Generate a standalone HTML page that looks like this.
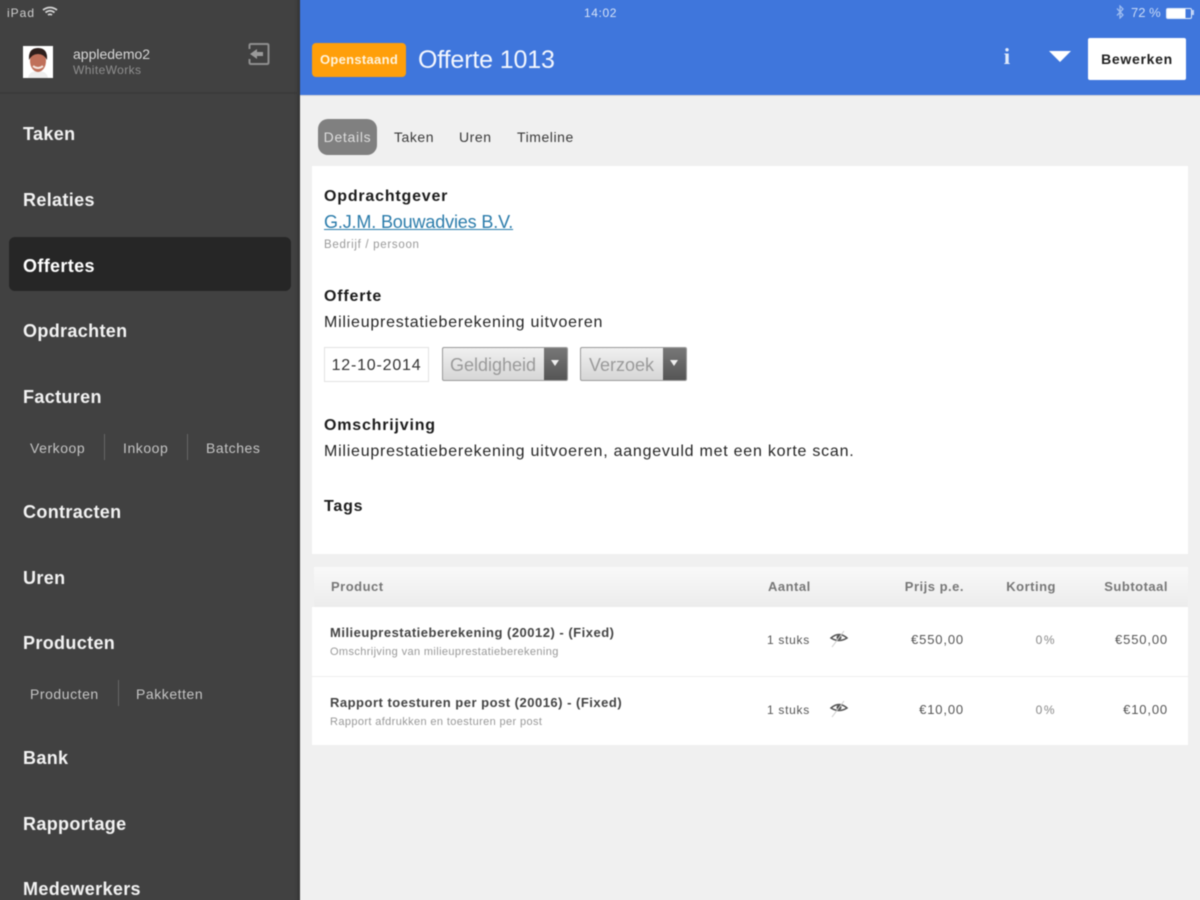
<!DOCTYPE html>
<html lang="nl"><head><meta charset="utf-8"><title>Offerte 1013</title>
<style>
html,body{margin:0;padding:0;width:1200px;height:900px;overflow:hidden;background:#f0f0f0;font-family:"Liberation Sans",sans-serif}
#clip{position:absolute;left:0;top:0;width:1200px;height:900px;overflow:hidden}
#w{position:absolute;left:0;top:0;width:1200px;height:900px;filter:blur(.45px)}
#side{position:absolute;left:-6px;top:-6px;width:306px;height:912px;background:#414141;box-shadow:inset -3px 0 3px -1px #333}
#top{position:absolute;left:300px;top:-6px;width:906px;height:101px;background:#3f76dc;border-bottom:1px solid #d8d8d8}
.t{position:absolute;white-space:nowrap;line-height:20px;height:20px}
.n{font-size:18px;font-weight:bold;color:#f2f2f2;left:23px;letter-spacing:.35px;margin-top:.5px}
.s{font-size:14px;color:#c4c4c4;letter-spacing:.55px;margin-top:-.5px}
.tab{font-size:14px;color:#3a3a3a;letter-spacing:.55px}
.sep{position:absolute;width:1px;height:26px;background:#666}
.h{font-size:16px;font-weight:bold;color:#1c1c1c;left:324px;letter-spacing:.8px;margin-top:1px}
.b{font-size:16px;color:#262626;left:324px;letter-spacing:.76px}
.th{font-size:13px;font-weight:bold;color:#777;letter-spacing:.5px;margin-top:.5px}
.r{text-align:right}
.c{font-size:12px;color:#555;letter-spacing:.7px}
.p{font-size:13px;color:#555;letter-spacing:.85px}
.pt{font-size:13px;font-weight:bold;color:#444;letter-spacing:.5px;left:330px;margin-top:.5px}
.ps{font-size:11px;color:#999;letter-spacing:.38px;left:330px}
.sel{position:absolute;top:347px;height:34px;border:1px solid #999;border-radius:2px;box-sizing:border-box;background:linear-gradient(#f0f0f0,#d6d6d6);color:#9a9a9a;font-size:18px;line-height:34px;overflow:hidden}
.sel i{position:absolute;right:0;top:0;width:23px;height:100%;background:linear-gradient(#777,#555)}
.sel i:after{content:"";position:absolute;left:7px;top:12px;border:4px solid transparent;border-top:6px solid #eee;border-bottom:0}
</style></head><body><div id="clip"><div id="w">
<div id="side"></div>
<div id="top"></div>

<div class="t" style="left:7px;top:3px;font-size:12px;color:#cfcfcf;letter-spacing:1px">iPad</div>
<svg style="position:absolute;left:42px;top:6px" width="16" height="12" viewBox="0 0 16 12"><path d="M1 4Q8-1 15 4M3.500 6.500Q8 3 12.500 6.500M6 9Q8 7.500 10 9" fill="none" stroke="#d5d5d5" stroke-width="1.800"/></svg>

<svg style="position:absolute;left:23px;top:46px" width="30" height="32" viewBox="0 0 30 32">
<rect width="30" height="32" fill="#fff"/><path d="M5 32Q6 25 15 25Q24 25 25 32Z" fill="#eee"/><ellipse cx="15" cy="15" rx="8" ry="11" fill="#c0705a"/><path d="M6 14Q5 2 15 2Q25 2 24 14Q21 8 15 8Q9 8 6 14Z" fill="#2e1f1c"/><path d="M10 20Q15 24 20 20" stroke="#f4e6df" stroke-width="2" fill="none"/>
</svg>
<div class="t" style="left:73px;top:44px;font-size:14px;color:#d6d6d6">appledemo2</div>
<div class="t" style="left:73px;top:60px;font-size:12px;color:#8f8f8f;letter-spacing:.4px">WhiteWorks</div>
<svg style="position:absolute;left:247px;top:42px" width="24" height="24" viewBox="0 0 24 24"><path d="M2.500 7V3.500Q2.500 2 4 2H20Q21.500 2 21.500 3.500V20.500Q21.500 22 20 22H4Q2.500 22 2.500 20.500V17" fill="none" stroke="#8f8f8f" stroke-width="2"/><path d="M3 12L10 7V10H16V14H10V17Z" fill="#9a9a9a"/></svg>
<div style="position:absolute;left:0;top:92px;width:297px;height:2px;background:#3a3a3a"></div>

<div style="position:absolute;left:9px;top:237px;width:282px;height:54px;background:#262626;border-radius:6px"></div>
<div class="t n" style="top:123px">Taken</div>
<div class="t n" style="top:189px">Relaties</div>
<div class="t n" style="top:255px;color:#fff">Offertes</div>
<div class="t n" style="top:320px">Opdrachten</div>
<div class="t n" style="top:386px">Facturen</div>
<div class="t s" style="left:30px;top:438px">Verkoop</div><div class="sep" style="left:104px;top:434px"></div>
<div class="t s" style="left:123px;top:438px">Inkoop</div><div class="sep" style="left:187px;top:434px"></div>
<div class="t s" style="left:206px;top:438px">Batches</div>
<div class="t n" style="top:501px">Contracten</div>
<div class="t n" style="top:567px">Uren</div>
<div class="t n" style="top:632px">Producten</div>
<div class="t s" style="left:30px;top:684px">Producten</div><div class="sep" style="left:118px;top:680px"></div>
<div class="t s" style="left:136px;top:684px">Pakketten</div>
<div class="t n" style="top:747px">Bank</div>
<div class="t n" style="top:813px">Rapportage</div>
<div class="t n" style="top:878px">Medewerkers</div>

<div class="t" style="left:584px;top:3px;font-size:12px;color:#d5e2f8;letter-spacing:.6px">14:02</div>
<svg style="position:absolute;left:1115px;top:5px" width="10" height="14" viewBox="0 0 10 14"><path d="M2 3.500L8 10L5 13V1L8 4L2 10.500" fill="none" stroke="#9dbcf0" stroke-width="1.300"/></svg>
<div class="t" style="left:1131px;top:3px;font-size:13px;color:#c9daf7">72 %</div>
<div style="position:absolute;left:1166px;top:8px;width:24px;height:9px;border:1px solid #dfe9fa;border-radius:2px;background:linear-gradient(90deg,#fff 78%,transparent 78%)"></div>
<div style="position:absolute;left:1192px;top:10px;width:2px;height:5px;background:#b9cff5"></div>

<div class="t" style="left:312px;top:43px;width:94px;height:34px;line-height:34px;background:#ff9f0a;border-radius:4px;color:#fff4de;font-size:13px;font-weight:bold;text-align:center;letter-spacing:.3px">Openstaand</div>
<div class="t" style="left:418px;top:45px;height:30px;line-height:30px;font-size:25px;color:#f2f6fe;letter-spacing:-.15px">Offerte 1013</div>
<div class="t" style="left:1000px;top:47px;width:14px;text-align:center;font-family:'Liberation Serif',serif;font-weight:bold;font-size:23px;color:#dfe9fb">i</div>
<div style="position:absolute;left:1049px;top:51px;border-left:11px solid transparent;border-right:11px solid transparent;border-top:11px solid #fff"></div>
<div class="t" style="left:1088px;top:38px;width:98px;height:42px;line-height:42px;background:#fff;border-radius:2px;text-align:center;font-size:14px;font-weight:bold;color:#222;letter-spacing:.7px">Bewerken</div>

<div class="t" style="left:318px;top:119px;width:59px;height:36px;line-height:36px;background:#808080;border-radius:10px;text-align:center;font-size:14px;color:#ddd;letter-spacing:.7px">Details</div>
<div class="t tab" style="left:394px;top:127px">Taken</div>
<div class="t tab" style="left:459px;top:127px">Uren</div>
<div class="t tab" style="left:517px;top:127px">Timeline</div>

<div style="position:absolute;left:312px;top:166px;width:876px;height:388px;background:#fff"></div>
<div class="t h" style="top:186px">Opdrachtgever</div>
<div class="t b" style="top:212px;font-size:18px;color:#2b7cab;text-decoration:underline;letter-spacing:-.15px">G.J.M. Bouwadvies B.V.</div>
<div class="t" style="left:324px;top:235px;font-size:11.500px;color:#999;letter-spacing:.7px">Bedrijf / persoon</div>
<div class="t h" style="top:286px">Offerte</div>
<div class="t b" style="top:313px">Milieuprestatieberekening uitvoeren</div>
<div class="t" style="left:324px;top:347px;width:105px;height:35px;line-height:36px;box-sizing:border-box;border:1px solid #e2e2e2;text-align:center;font-size:16px;color:#333;letter-spacing:.8px">12-10-2014</div>
<div class="sel" style="left:442px;width:126px;padding-left:7px">Geldigheid<i></i></div>
<div class="sel" style="left:580px;width:107px;padding-left:8px">Verzoek<i></i></div>
<div class="t h" style="top:415px">Omschrijving</div>
<div class="t b" style="top:442px">Milieuprestatieberekening uitvoeren, aangevuld met een korte scan.</div>
<div class="t h" style="top:496px">Tags</div>

<div style="position:absolute;left:314px;top:567px;width:874px;height:40px;background:linear-gradient(#f9f9f9,#ececec)"></div>
<div class="t th" style="left:331px;top:576px">Product</div>
<div class="t th" style="left:768px;top:576px">Aantal</div>
<div class="t th r" style="left:864px;width:100px;top:576px">Prijs p.e.</div>
<div class="t th r" style="left:956px;width:100px;top:576px">Korting</div>
<div class="t th r" style="left:1068px;width:100px;top:576px">Subtotaal</div>

<div style="position:absolute;left:312px;top:607px;width:876px;height:138px;background:#fff"></div>
<div style="position:absolute;left:312px;top:676px;width:876px;height:1px;background:#eee"></div>

<div class="t pt" style="top:622px">Milieuprestatieberekening (20012) - (Fixed)</div>
<div class="t ps" style="top:642px">Omschrijving van milieuprestatieberekening</div>
<div class="t c" style="left:767px;top:630px">1 stuks</div>
<svg style="position:absolute;left:829px;top:629px" width="20" height="20" viewBox="0 0 20 20"><path d="M2 9Q10 2 18 9Q10 14 2 9Z" fill="none" stroke="#555" stroke-width="1.500"/><circle cx="10" cy="8.500" r="2.500" fill="#555"/><path d="M15 2L3 18" stroke="#ccc"/></svg>
<div class="t p r" style="left:864px;width:100px;top:630px">€550,00</div>
<div class="t c r" style="left:956px;width:100px;top:630px;color:#888;letter-spacing:1.500px">0%</div>
<div class="t p r" style="left:1068px;width:100px;top:630px">€550,00</div>

<div class="t pt" style="top:692px">Rapport toesturen per post (20016) - (Fixed)</div>
<div class="t ps" style="top:712px">Rapport afdrukken en toesturen per post</div>
<div class="t c" style="left:767px;top:700px">1 stuks</div>
<svg style="position:absolute;left:829px;top:699px" width="20" height="20" viewBox="0 0 20 20"><path d="M2 9Q10 2 18 9Q10 14 2 9Z" fill="none" stroke="#555" stroke-width="1.500"/><circle cx="10" cy="8.500" r="2.500" fill="#555"/><path d="M15 2L3 18" stroke="#ccc"/></svg>
<div class="t p r" style="left:864px;width:100px;top:700px">€10,00</div>
<div class="t c r" style="left:956px;width:100px;top:700px;color:#888;letter-spacing:1.500px">0%</div>
<div class="t p r" style="left:1068px;width:100px;top:700px">€10,00</div>
</div></div></body></html>
